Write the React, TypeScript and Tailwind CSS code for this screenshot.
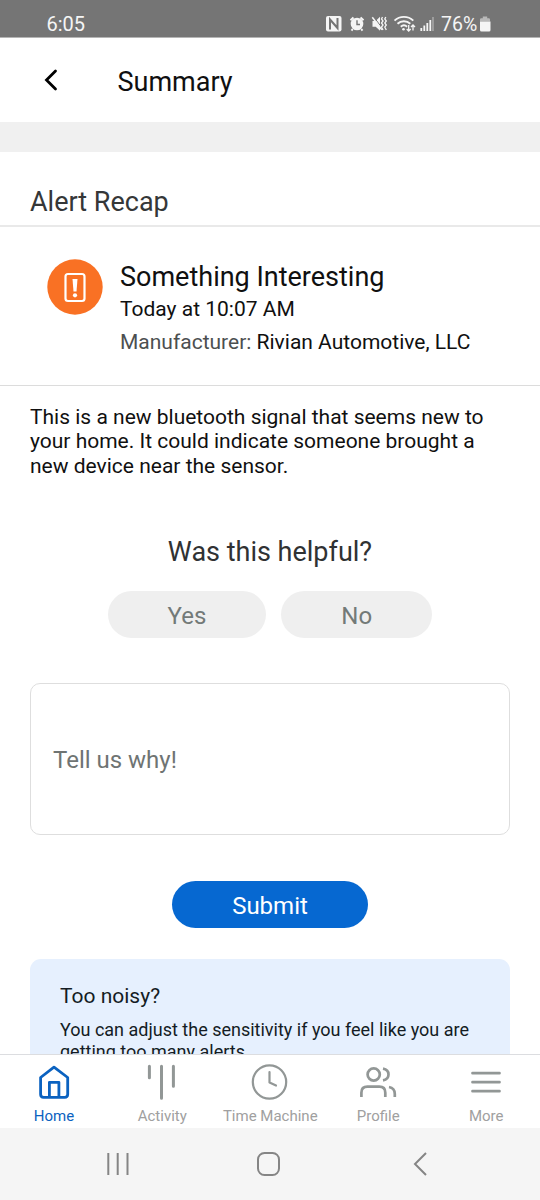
import type { ReactNode } from "react";

function StatusIcons() {
  return (
    <svg width="168" height="22" viewBox="324 13 168 22" fill="none" stroke="#f5f5f5">
      <rect x="326" y="16" width="15.5" height="15.5" rx="2" fill="#f5f5f5" stroke="none" />
      <path d="M330 29.5V19.5l7.5 8.5V18" stroke="#757575" strokeWidth="2" />
      <circle cx="357" cy="24" r="6.3" fill="#f5f5f5" stroke="none" />
      <path d="M350.5 20.3l3-2.8M363.5 20.3l-3-2.8M352.7 29l-1.2 1.6M361.3 29l1.2 1.6" strokeWidth="2" />
      <path d="M357 20.3v4.2h3" stroke="#757575" strokeWidth="1.4" />
      <path d="M372.5 21h3.2l4.3-4.2v14l-4.3-4.1h-3.2z" fill="#f5f5f5" stroke="none" />
      <path d="M373.5 16.5l9 12" stroke="#757575" strokeWidth="1" />
      <path d="M372.3 17.2l9.5 12.5" strokeWidth="1.5" />
      <path d="M382.5 17l-1 2 1.5 2-1.5 2 1.5 2-1.5 2 1.5 3M385.8 17l-1 2 1.5 2-1.5 2 1.5 2-1.5 2 1.5 3" strokeWidth="1.3" />
      <path d="M394.5 20.6c5.3-5 13.5-5 18.8 0M397.5 23.8c3.6-3.4 9.2-3.4 12.8 0M400.8 26.7c2-1.8 4.3-1.8 6.3 0" strokeWidth="1.9" />
      <circle cx="403.5" cy="29.2" r="1.3" fill="#f5f5f5" stroke="none" />
      <path d="M408.7 25v6m-2-2l2 2 2-2M413 30.5V25m-2 2l2-2 2 2" strokeWidth="1.3" />
      <path d="M421.3 31v-3M424.3 31v-5.5M427.3 31v-8M430.3 31v-11" strokeWidth="1.8" />
      <path d="M433 31V17" strokeWidth="1.4" opacity=".45" />
      <path d="M480 21.5v-2q0-1.3 1.3-1.3h1.5v-1.7h4.4v1.7h1.5q1.3 0 1.3 1.3v2z" fill="#b8b8b8" stroke="none" />
      <path d="M480 21.5h10.5V30q0 1.5-1.5 1.5h-7.5q-1.5 0-1.5-1.5z" fill="#f5f5f5" stroke="none" />
    </svg>
  );
}

function Tab({ label, active, children }: { label: string; active?: boolean; children: ReactNode }) {
  return (
    <button className={active ? "flex w-[108px] flex-col items-center text-[#0b62c0]" : "flex w-[108px] flex-col items-center text-[#929796]"}>
      <svg width="40" height="40" viewBox="0 0 40 40" className="mt-[7px]" fill="none" stroke="currentColor" strokeWidth="2.2" strokeLinecap="round" strokeLinejoin="round">
        {children}
      </svg>
      <span className={active ? "mt-[4px] text-[15px] leading-[20px]" : "mt-[4px] ml-[0.5px] text-[15px] leading-[20px] text-[#a0a0a0]"}>{label}</span>
    </button>
  );
}

export default function App() {
  return (
    <div className="flex h-[1200px] w-[540px] flex-col overflow-hidden bg-white font-['Roboto',sans-serif] whitespace-nowrap text-[#101010]">
      <div className="flex h-[38px] shrink-0 items-start border-b border-[#b5b5b5] bg-[#757575] pt-[13px] text-[20px] leading-[22px] text-[#f5f5f5]">
        <span className="w-[324px] pl-[46.5px]">6:05</span>
        <div className="relative">
          <StatusIcons />
          <span className="absolute top-[1px] left-[117px] text-[19.5px]">76%</span>
        </div>
      </div>

      <header className="flex h-[83.5px] shrink-0 items-center">
        <svg width="20" height="28" viewBox="0 0 20 28" className="ml-[42px]" fill="none" stroke="#000" strokeWidth="2.8" strokeLinecap="round" strokeLinejoin="miter">
          <path d="M13.5 5L4.5 14l9 9" />
        </svg>
        <h1 className="ml-[55.5px] pt-[5px] text-[27px]">Summary</h1>
      </header>
      <div className="h-[30px] shrink-0 bg-[#f0f0f0]" />

      <main className="flex min-h-0 flex-1 flex-col overflow-hidden">
        <h2 className="h-[75.5px] shrink-0 border-b-2 border-[#e9e9e9] pt-[35px] pl-[30px] text-[27px] leading-[30px] text-[#353738]">Alert Recap</h2>
        <section className="flex h-[159px] shrink-0 border-b border-[#dcdcdc] pt-[32px] pl-[47px]">
          <svg width="56" height="56" viewBox="0 0 56 56" fill="none">
            <circle cx="28" cy="28" r="27.7" fill="#f97124" />
            <rect x="18.5" y="15" width="19" height="27" rx="2.5" stroke="#fff" strokeWidth="2.2" />
            <path d="M25.5 20h5l-1 12.5h-3z" fill="#fff" />
            <circle cx="28" cy="36.3" r="2.1" fill="#fff" />
          </svg>
          <div className="ml-[17px]">
            <h3 className="pt-[3px] text-[27px] leading-[30px]">Something Interesting</h3>
            <p className="mt-[5px] text-[21px] leading-[24px]">Today at 10:07 AM</p>
            <p className="mt-[9px] text-[21px] leading-[24px]"><span className="text-[#4c4f50]">Manufacturer:</span> Rivian Automotive, LLC</p>
          </div>
        </section>

        <p className="mt-[18.5px] ml-[30px] text-[21px] leading-[24.75px]">
          This is a new bluetooth signal that seems new to<br />your home. It could indicate someone brought a<br />new device near the sensor.
        </p>

        <h2 className="mt-[58.5px] text-center text-[27px] leading-[30px] text-[#303233]">Was this helpful?</h2>
        <div className="mt-[23.5px] flex justify-center gap-[15px] text-[24px] text-[#737a78]">
          <button className="h-[47px] w-[158.5px] rounded-full bg-[#efefef] pt-[3px]">Yes</button>
          <button className="h-[47px] w-[151px] rounded-full bg-[#efefef] pt-[3px]">No</button>
        </div>

        <div className="mx-[30px] mt-[45.5px] flex h-[152px] shrink-0 items-center rounded-[10px] border-[1.5px] border-[#dedede] pt-[2px] pl-[22px] text-[24px] text-[#6f7473]">Tell us why!</div>

        <button className="mt-[46px] h-[47px] w-[196px] shrink-0 self-center rounded-full bg-[#0668d1] pt-[2px] text-[24px] text-white">Submit</button>

        <section className="mx-[30px] mt-[30.5px] h-[150px] shrink-0 rounded-[11px] bg-[#e6f0fe] pt-[24.5px] pl-[30px] text-[#141c24]">
          <h3 className="text-[21px] leading-[26px]">Too noisy?</h3>
          <p className="mt-[10px] text-[18px] leading-[22px]">You can adjust the sensitivity if you feel like you are<br />getting too many alerts.</p>
        </section>
      </main>

      <nav className="flex h-[74px] shrink-0 items-start border-t border-[#dcdde0] bg-white">
        <Tab label="Home" active>
          <path strokeWidth="2.8" d="M6.6 15.5L20 5.2l13.7 10.3V32.3q0 3-3 3H9.6q-3 0-3-3zM15.4 35V20.3h9.5V35" />
        </Tab>
        <Tab label="Activity">
          <path strokeWidth="3" d="M7.4 4.2v11.5M19.5 4.2v32M31.4 4.2v20" />
        </Tab>
        <Tab label="Time Machine">
          <circle cx="19.5" cy="20" r="16.7" />
          <path d="M19.5 10v10.5l6.5 3" />
        </Tab>
        <Tab label="Profile">
          <g strokeWidth="2.7" strokeLinecap="butt">
            <circle cx="15.7" cy="12.5" r="6.1" />
            <path d="M3.4 35v-4.3q0-6 6-6h11.9q6 0 6 6V35M25 6.7q5.5 1 5.5 5.8t-5.5 5.8M31 25q5.8 1 5.8 7V35" />
          </g>
        </Tab>
        <Tab label="More">
          <path strokeWidth="2.7" d="M6.5 11.2h27M6.5 20.2h27M6.5 29.2h27" />
        </Tab>
      </nav>

      <footer className="h-[72px] shrink-0 bg-[#f5f5f5]">
        <svg width="540" height="72" viewBox="0 0 540 72" fill="none" stroke="#858585" strokeWidth="2">
          <path d="M108.3 25v22M117.7 25v22M127.5 25v22M426 25l-11 11 11 11" />
          <rect x="258" y="25" width="21" height="22" rx="6.5" />
        </svg>
      </footer>
    </div>
  );
}
